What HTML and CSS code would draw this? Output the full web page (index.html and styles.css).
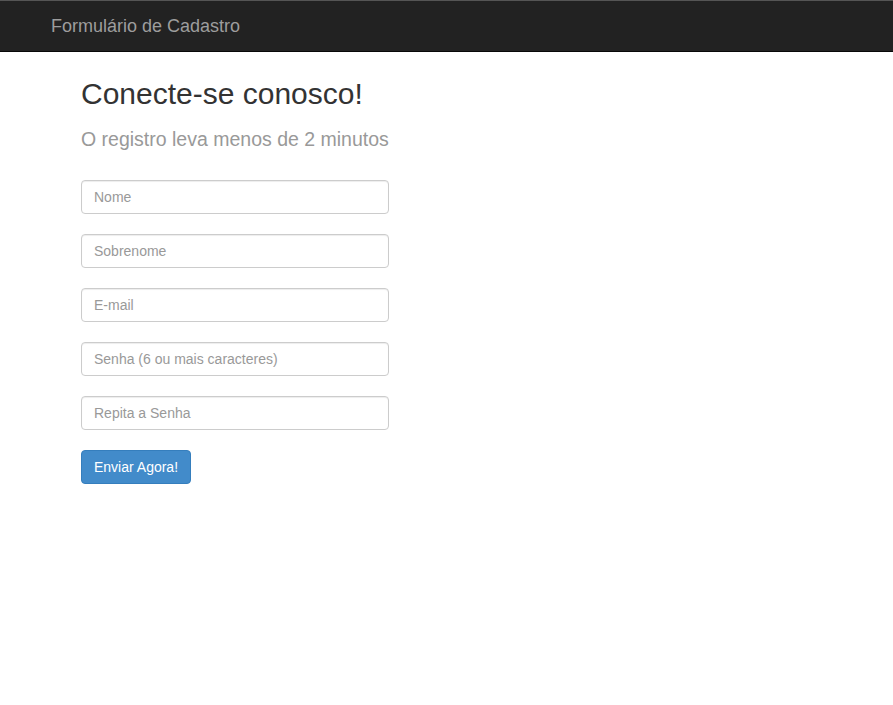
FILE: index.html
```html
<!DOCTYPE html>
<html lang="pt-BR">
<head>
<meta charset="utf-8">
<title>Formulário de Cadastro</title>
<link rel="stylesheet" href="styles.css">
</head>
<body>
<nav class="navbar">
  <a class="brand" href="#">Formulário de Cadastro</a>
</nav>
<main class="content">
  <h1 class="title">Conecte-se conosco!</h1>
  <h2 class="subtitle">O registro leva menos de 2 minutos</h2>
  <form class="form">
    <input class="field" type="text" placeholder="Nome">
    <input class="field" type="text" placeholder="Sobrenome">
    <input class="field" type="email" placeholder="E-mail">
    <input class="field" type="password" placeholder="Senha (6 ou mais caracteres)">
    <input class="field" type="password" placeholder="Repita a Senha">
    <button class="btn" type="button">Enviar Agora!</button>
  </form>
</main>
</body>
</html>
```
FILE: styles.css
```css
* { box-sizing: border-box; }
html, body {
  margin: 0;
  padding: 0;
  background: #fff;
  font-family: "Liberation Sans", Arial, sans-serif;
  font-size: 14px;
  line-height: 1.428571;
  color: #333;
}
.navbar {
  height: 52px;
  background: #222;
  border-top: 1px solid #555;
  border-bottom: 1px solid #080808;
  display: flex;
  align-items: flex-start;
  padding-left: 51px;
}
.brand {
  display: block;
  padding: 15px 0;
  font-size: 18px;
  line-height: 20px;
  color: #9d9d9d;
  text-decoration: none;
}
.content {
  padding-left: 81px;
}
.title {
  margin: 25px 0 0;
  font-size: 30px;
  line-height: 33px;
  font-weight: 500;
  color: #333;
}
.subtitle {
  margin: 19px 0 0;
  font-size: 19.5px;
  line-height: 21.5px;
  font-weight: 400;
  color: #999;
}
.form {
  margin-top: 29px;
  display: flex;
  flex-direction: column;
  align-items: flex-start;
  gap: 20px;
}
.field {
  width: 308px;
  height: 34px;
  padding: 6px 12px;
  font-family: inherit;
  font-size: 14px;
  line-height: 20px;
  color: #555;
  background: #fff;
  border: 1px solid #ccc;
  border-radius: 4px;
  box-shadow: inset 0 1px 1px rgba(0,0,0,.075);
  outline: none;
}
.field::placeholder { color: #999; }
.btn {
  height: 34px;
  padding: 6px 12px;
  font-family: inherit;
  font-size: 14px;
  line-height: 20px;
  color: #fff;
  background: #428bca;
  border: 1px solid #357ebd;
  border-radius: 4px;
  cursor: pointer;
}
```
